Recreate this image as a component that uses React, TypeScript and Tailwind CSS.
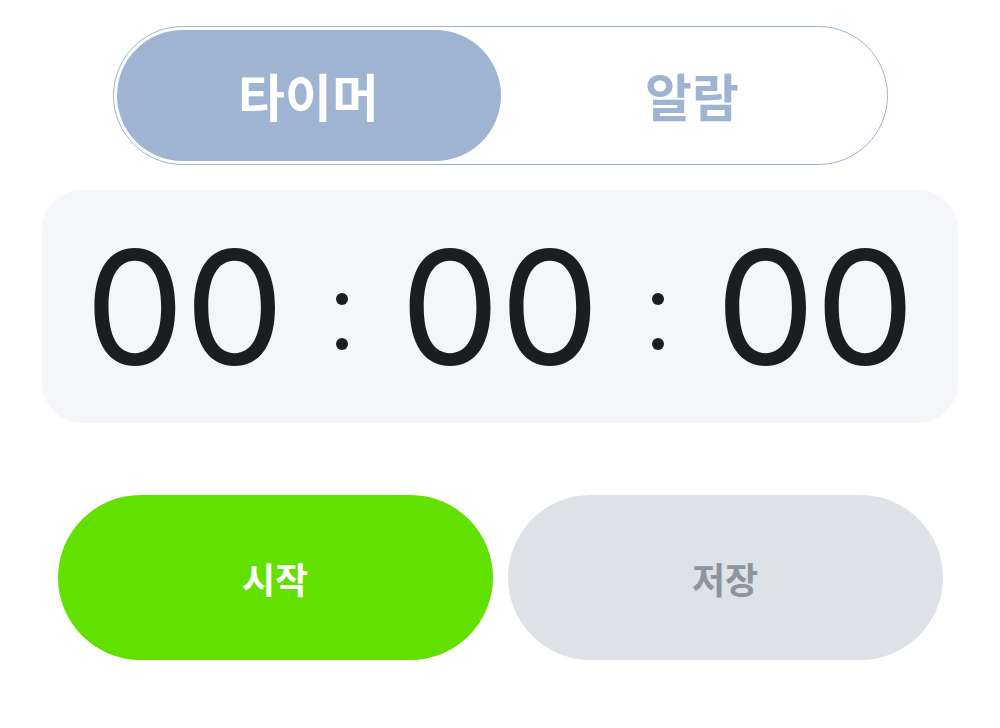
import { useState } from "react";

const kr = "font-['Noto_Sans_CJK_KR','Noto_Sans',sans-serif]";

function Digits(props: { value: string }) {
  return <span>{props.value}</span>;
}

function Colon() {
  return (
    <span className="flex flex-col gap-[33px] px-[52px] pt-[30px]">
      <span className="block h-[12px] w-[12px] rounded-full bg-[#1c1d21]" />
      <span className="block h-[12px] w-[12px] rounded-full bg-[#1c1d21]" />
    </span>
  );
}

export default function App() {
  const [mode, setMode] = useState<"timer" | "alarm">("timer");

  return (
    <div className="flex h-[728px] w-[1000px] flex-col items-center bg-white">
      {/* Mode toggle */}
      <div className="mt-[26px] flex h-[139px] w-[775px] rounded-full border-[1.5px] border-[#9db3d3] p-[3px]">
        <button
          onClick={() => setMode("timer")}
          className={`flex w-[384px] items-center justify-center rounded-full text-[51px] font-semibold ${kr} ${
            mode === "timer" ? "bg-[#9fb4d2] text-white" : "text-[#9fb4d2]"
          }`}
        >
          타이머
        </button>
        <button
          onClick={() => setMode("alarm")}
          className={`flex flex-1 items-center justify-center rounded-full text-[51px] font-semibold ${kr} ${
            mode === "alarm" ? "bg-[#9fb4d2] text-white" : "text-[#9fb4d2]"
          }`}
        >
          알람
        </button>
      </div>

      {/* Time display */}
      <div className="mt-[25px] flex h-[233px] w-[916px] items-center justify-center rounded-[40px] bg-[#f5f6fa]">
        <div className="flex items-center font-['Inter',sans-serif] text-[158px] leading-none font-normal text-[#1c1d21]">
          <Digits value="00" />
          <Colon />
          <Digits value="00" />
          <Colon />
          <Digits value="00" />
        </div>
      </div>

      {/* Actions */}
      <div className="mt-[72px] flex gap-[15px]">
        <button className={`h-[165px] w-[435px] rounded-full bg-[#62e000] text-[36px] font-semibold text-white ${kr}`}>
          시작
        </button>
        <button className={`h-[165px] w-[435px] rounded-full bg-[#dee1e5] text-[36px] font-semibold text-[#8e949b] ${kr}`}>
          저장
        </button>
      </div>
    </div>
  );
}
